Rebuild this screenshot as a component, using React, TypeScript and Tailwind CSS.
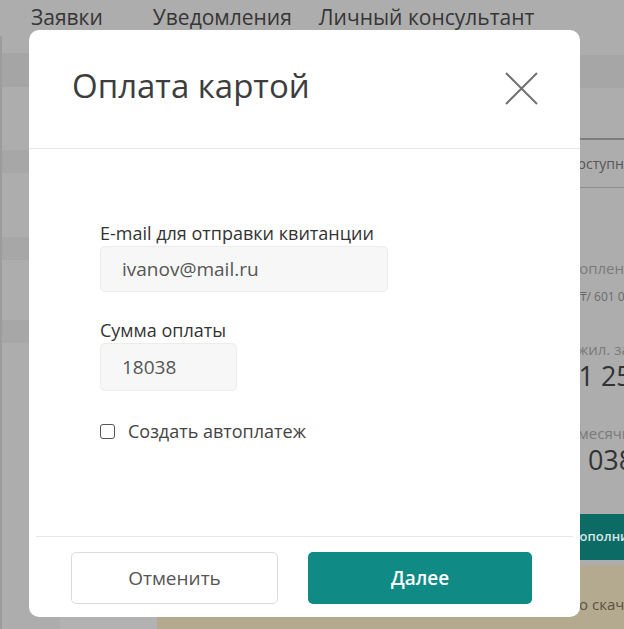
import React from "react"

const font = { fontFamily: '"Open Sans", "Noto Sans", sans-serif' }

function BackgroundPage() {
  return (
    <div className="flex flex-col w-[624px] h-[629px] bg-[#adadad]">
      {/* Top navigation */}
      <div className="flex items-center h-[36px] pl-[31px] text-[21px] text-[#363636] shrink-0 whitespace-nowrap">
        <span>Заявки</span>
        <span className="ml-[50px]">Уведомления</span>
        <span className="ml-[27px]">Личный консультант</span>
      </div>

      <div className="flex flex-1">
        {/* Left side */}
        <div className="flex flex-col w-[157px] border-l-2 border-[#9c9c9c]">
          <div className="h-[17px]" />
          <div className="h-[34px] bg-[#a5a5a5]" />
          <div className="h-[63px]" />
          <div className="h-[23px] bg-[#a7a7a7]" />
          <div className="h-[64px]" />
          <div className="h-[23px] bg-[#a7a7a7]" />
          <div className="h-[60px]" />
          <div className="h-[23px] bg-[#a7a7a7]" />
          <div className="flex-1" />
          <div className="flex h-[12px]">
            <div className="w-[58px]" />
            <div className="flex-1 bg-[#b2b2b2]" />
          </div>
        </div>

        {/* Content */}
        <div className="flex flex-col flex-1">
          <div className="h-[19px]" />
          <div className="h-[33px] bg-[#a6a6a6]" />
          <div className="flex flex-1">
            <div className="flex-1" />
            <div className="flex flex-col w-[100px] pt-[50px] whitespace-nowrap overflow-hidden">
              <div className="h-[50px] shrink-0 border-t-2 border-b border-t-[#7e7e7e] border-b-[#8f8f8f] flex items-center pl-[44px] text-[14px] text-[#555]">
                Доступно
              </div>
              <div className="pt-[71px] pl-[28px] text-[15px] leading-[18px] text-[#7a7a7a]">Накоплено</div>
              <div className="pt-[12px] pl-[56px] text-[12px] leading-[16px] text-[#6a6a6a]">₸/ 601 000</div>
              <div className="pt-[35px] pl-[2px] text-[15px] leading-[18px] text-[#7a7a7a]">Сумма жил. займа</div>
              <div className="pt-[2px] pl-[39px] text-[27px] leading-[32px] text-[#333]">11 254</div>
              <div className="pt-[32px] pl-[26px] text-[15px] leading-[18px] text-[#7a7a7a]">Ежемесячно</div>
              <div className="pt-[2px] pl-[26px] text-[27px] leading-[32px] text-[#333]">18 038</div>
              <div className="mt-[38px] h-[46px] shrink-0 bg-[#0d6b66] flex items-center pl-[46px] text-[13px] font-semibold text-[#d8e6e4]">
                Пополнить
              </div>
            </div>
          </div>
          <div className="h-[64px] bg-[#b4aa8f] flex justify-end">
            <div className="w-[100px] pt-[28px] pl-[12px] text-[15px] text-[#5b5342] whitespace-nowrap overflow-hidden">Можно скачать</div>
          </div>
        </div>
      </div>
    </div>
  )
}

function PaymentModal() {
  return (
    <div className="absolute left-[29px] top-[30px] w-[551px] h-[587px] bg-white rounded-[10px] flex flex-col">
      {/* Header */}
      <div className="flex items-center justify-between h-[119px] pl-[43px] pr-[42px] pb-[6px] border-b border-[#e6e6e6] shrink-0">
        <h2 className="text-[33px] text-[#3d3d3d] font-normal">Оплата картой</h2>
        <svg width="33" height="33" viewBox="0 0 33 33" className="mt-[4px]">
          <path d="M1 1 L32 32 M32 1 L1 32" stroke="#737373" strokeWidth="2" />
        </svg>
      </div>

      {/* Body */}
      <div className="flex flex-col flex-1 pl-[71px] pt-[72px]">
        <label className="text-[18px] leading-[24px] text-[#333]">E-mail для отправки квитанции</label>
        <div className="mt-[1px] w-[288px] h-[46px] bg-[#f7f7f7] border border-[#ececec] rounded-[5px] flex items-center pl-[21px] text-[19px] text-[#555]">
          ivanov@mail.ru
        </div>

        <label className="mt-[26px] text-[18px] leading-[24px] text-[#333]">Сумма оплаты</label>
        <div className="mt-[1px] w-[137px] h-[48px] bg-[#f7f7f7] border border-[#ececec] rounded-[5px] flex items-center pl-[21px] text-[19px] text-[#555]">
          18038
        </div>

        <div className="mt-[27px] flex items-center gap-[13px] h-[26px]">
          <span className="w-[15px] h-[15px] border-[1.5px] border-[#555] rounded-[3px] bg-white" />
          <span className="text-[18px] text-[#444]">Создать автоплатеж</span>
        </div>
      </div>

      {/* Footer */}
      <div className="mx-[7px] border-t border-[#e6e6e6] pt-[15px] pb-[13px] pl-[35px] flex gap-[30px]">
        <button className="w-[207px] h-[52px] bg-white border border-[#dcdcdc] rounded-[5px] text-[19px] text-[#555]">
          Отменить
        </button>
        <button className="w-[224px] h-[52px] bg-[#0f8a85] rounded-[5px] text-[19px] font-semibold text-white">
          Далее
        </button>
      </div>
    </div>
  )
}

export default function App() {
  return (
    <div className="relative w-[624px] h-[629px] overflow-hidden" style={font}>
      <BackgroundPage />
      <PaymentModal />
    </div>
  )
}
